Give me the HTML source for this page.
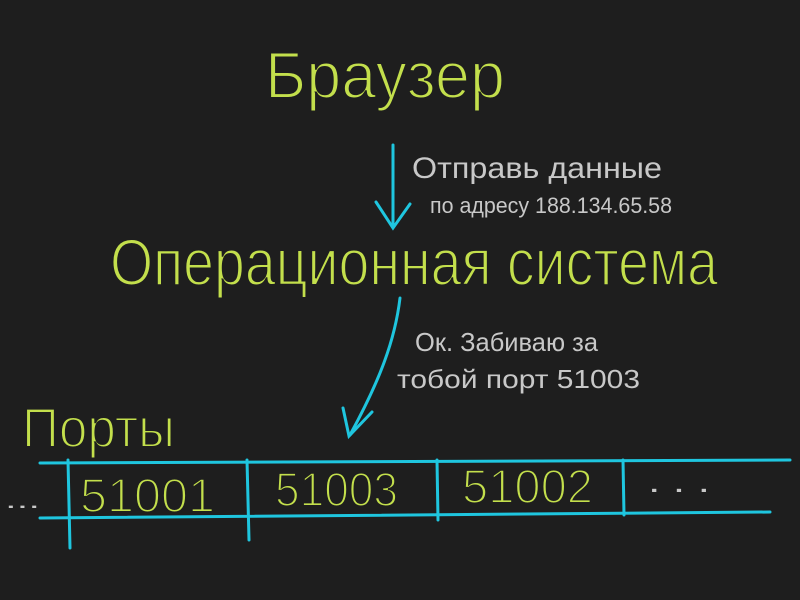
<!DOCTYPE html>
<html><head><meta charset="utf-8"><style>
html,body{margin:0;padding:0;background:#1e1e1e;}
svg{display:block}
text{font-family:"Liberation Sans",sans-serif;}
</style></head><body>
<svg width="800" height="600" viewBox="0 0 800 600">
<rect width="800" height="600" fill="#1e1e1e"/>
<g fill="#c3df4c" stroke="#1e1e1e" stroke-width="2">
<text x="265" y="98" font-size="66" textLength="240" lengthAdjust="spacingAndGlyphs">Браузер</text>
<text x="110" y="285" font-size="66" textLength="608" lengthAdjust="spacingAndGlyphs">Операционная система</text>
<text x="22" y="447" font-size="56" textLength="153" lengthAdjust="spacingAndGlyphs">Порты</text>
<text x="80" y="512" font-size="48" textLength="135" lengthAdjust="spacingAndGlyphs">51001</text>
<text x="275" y="506" font-size="48" textLength="123" lengthAdjust="spacingAndGlyphs">51003</text>
<text x="462" y="503" font-size="48" textLength="131" lengthAdjust="spacingAndGlyphs">51002</text>
</g>
<g fill="#c8c8c8">
<text x="412" y="178" font-size="30" textLength="250" lengthAdjust="spacingAndGlyphs">Отправь данные</text>
<text x="430" y="213" font-size="22" textLength="242" lengthAdjust="spacingAndGlyphs">по адресу 188.134.65.58</text>
<text x="415" y="351" font-size="26" textLength="183" lengthAdjust="spacingAndGlyphs">Ок. Забиваю за</text>
<text x="397" y="388" font-size="26" textLength="243" lengthAdjust="spacingAndGlyphs">тобой порт 51003</text>
<text x="5" y="508" font-size="22" textLength="35" lengthAdjust="spacingAndGlyphs">...</text>
<text x="648" y="492" font-size="30" textLength="62" lengthAdjust="spacingAndGlyphs">. . .</text>
</g>
<g stroke="#1fc6df" stroke-width="3" fill="none" stroke-linecap="round">
<path d="M393 145 L393 227"/>
<path d="M376 202 L393 228 L410 204"/>
<path d="M400 298 C395 340 380 380 350 435"/>
<path d="M343 408 L349 436 L372 412"/>
<path d="M40 463 L790 460"/>
<path d="M40 518 L770 512"/>
<path d="M68 460 L70 548"/>
<path d="M247 460 L249 540"/>
<path d="M437 460 L438 520"/>
<path d="M623 460 L624 515"/>
</g>
</svg>
</body></html>
